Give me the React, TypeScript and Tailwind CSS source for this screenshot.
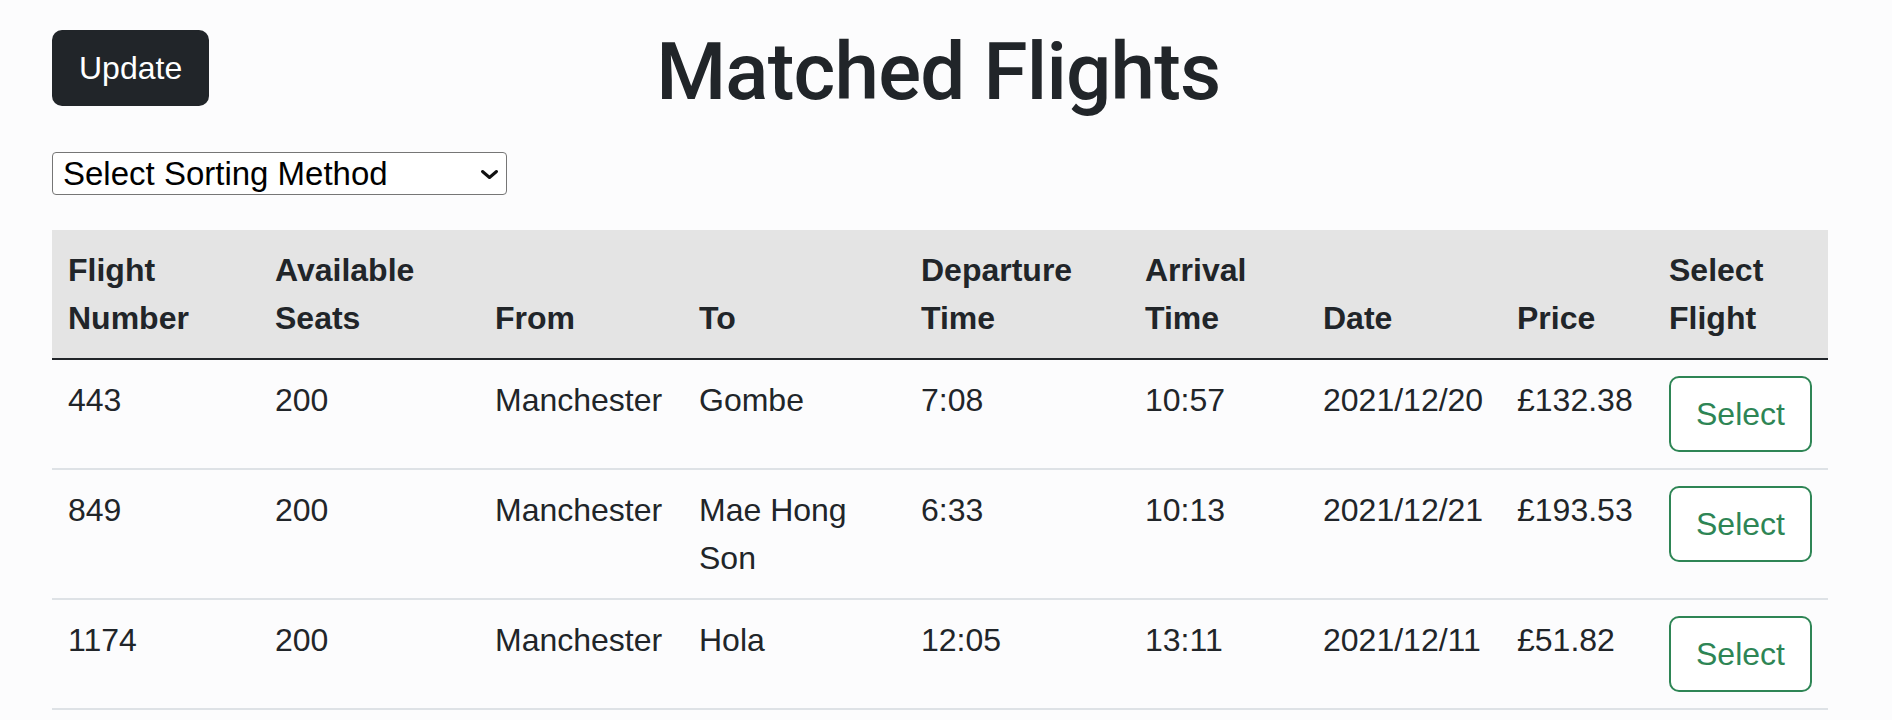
import React from "react";

type Flight = {
  num: string;
  seats: string;
  from: string;
  to: string;
  dep: string;
  arr: string;
  date: string;
  price: string;
};

const flights: Flight[] = [
  { num: "443", seats: "200", from: "Manchester", to: "Gombe", dep: "7:08", arr: "10:57", date: "2021/12/20", price: "£132.38" },
  { num: "849", seats: "200", from: "Manchester", to: "Mae Hong Son", dep: "6:33", arr: "10:13", date: "2021/12/21", price: "£193.53" },
  { num: "1174", seats: "200", from: "Manchester", to: "Hola", dep: "12:05", arr: "13:11", date: "2021/12/11", price: "£51.82" },
];

const headers = [
  "Flight Number",
  "Available Seats",
  "From",
  "To",
  "Departure Time",
  "Arrival Time",
  "Date",
  "Price",
  "Select Flight",
];

function Th({ children }: { children: React.ReactNode }) {
  return (
    <th className="bg-[#e4e4e4] px-4 py-4 text-left align-bottom font-bold border-b-2 border-[#212529]">
      {children}
    </th>
  );
}

function Td({ children }: { children: React.ReactNode }) {
  return <td className="px-4 py-4 align-top border-b-2 border-[#dee2e6]">{children}</td>;
}

export default function App() {
  return (
    <div className="min-h-screen bg-[#fcfcfd] font-['Liberation_Sans',Arial,sans-serif] text-[#212529]">
      <div className="px-[52px] pt-[24px]">
        <div className="flex items-start">
          <button className="mt-[6px] rounded-[10px] bg-[#212529] px-[27px] py-[14px] text-[32px] leading-[48px] text-white">
            Update
          </button>
          <h1 className="ml-[447px] font-['Roboto',sans-serif] text-[80px] leading-[96px] font-medium tracking-[-0.01em] text-[#212529]">
            Matched Flights
          </h1>
        </div>

        <div className="relative mt-[32px] w-[455px]">
          <select
            className="h-[43px] w-full appearance-none rounded-[4px] border border-[#767676] bg-white pl-[10px] text-[33px] leading-[40px] text-black"
            defaultValue="none"
          >
            <option value="none">Select Sorting Method</option>
            <option value="price">Price</option>
            <option value="date">Date</option>
          </select>
          <svg
            className="pointer-events-none absolute right-[8px] top-[17px] h-[11px] w-[19px]"
            viewBox="0 0 19 11"
            fill="none"
          >
            <path d="M2.5 2.5 L9.5 8.5 L16.5 2.5" stroke="#111" strokeWidth="3" strokeLinecap="round" strokeLinejoin="round" />
          </svg>
        </div>

        <table className="mt-[35px] w-[1776px] table-fixed border-separate border-spacing-0 text-[32px] leading-[48px]">
          <colgroup>
            <col className="w-[207px]" />
            <col className="w-[220px]" />
            <col className="w-[204px]" />
            <col className="w-[222px]" />
            <col className="w-[224px]" />
            <col className="w-[178px]" />
            <col className="w-[194px]" />
            <col className="w-[152px]" />
            <col className="w-[175px]" />
          </colgroup>
          <thead>
            <tr>
              {headers.map((h) => (
                <Th key={h}>{h}</Th>
              ))}
            </tr>
          </thead>
          <tbody>
            {flights.map((f) => (
              <tr key={f.num}>
                <Td>{f.num}</Td>
                <Td>{f.seats}</Td>
                <Td>{f.from}</Td>
                <Td>{f.to}</Td>
                <Td>{f.dep}</Td>
                <Td>{f.arr}</Td>
                <Td>{f.date}</Td>
                <Td>{f.price}</Td>
                <Td>
                  <button className="block rounded-[10px] border-2 border-[#2e8555] bg-white px-[25px] py-[12px] text-[32px] leading-[48px] text-[#2e8555]">
                    Select
                  </button>
                </Td>
              </tr>
            ))}
          </tbody>
        </table>
      </div>
    </div>
  );
}
